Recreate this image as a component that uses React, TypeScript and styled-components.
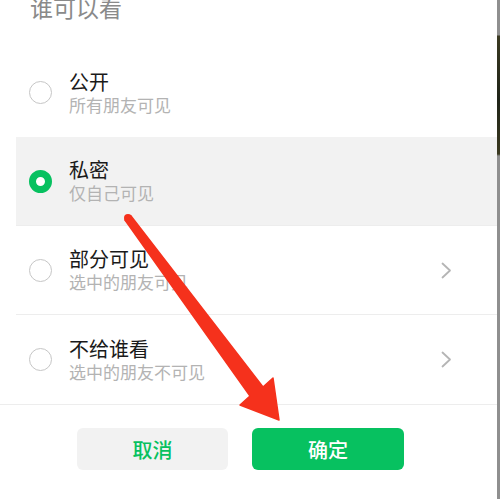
import React from "react";
import styled, { createGlobalStyle } from "styled-components";

const GlobalStyle = createGlobalStyle`
  html, body { margin: 0; padding: 0; background: #ffffff; }
  body { font-family: "Noto Sans CJK SC", "Noto Sans", sans-serif; overflow: hidden; }
`;

const Page = styled.div`
  position: relative;
  display: flex;
  width: 500px;
  height: 499px;
  overflow: hidden;
`;

const Panel = styled.div`
  flex: 1;
  display: flex;
  flex-direction: column;
  background: #ffffff;
  border-bottom-right-radius: 6px;
`;

const EdgeStrip = styled.div`
  width: 3px;
  background: linear-gradient(
    to bottom,
    #8f8f8f 0px,
    #8f8f8f 35px,
    #3b3a22 36px,
    #1f2418 100px,
    #3a3920 154px,
    #8f8f8f 156px,
    #8f8f8f 100%
  );
`;

const Title = styled.div`
  font-size: 23px;
  line-height: 23px;
  color: #8a8a8a;
  padding-left: 30px;
  margin-top: -4px;
  height: 23px;
`;

const List = styled.div`
  display: flex;
  flex-direction: column;
  margin-top: 29px;
  border-bottom: 1px solid #ededed;
`;

const Row = styled.div<{ $active?: boolean; $divider?: boolean }>`
  display: flex;
  align-items: center;
  gap: 17px;
  height: 89px;
  box-sizing: border-box;
  margin-left: 16px;
  padding-left: 13px;
  padding-right: 45px;
  background: ${(p) => (p.$active ? "#f2f2f2" : "transparent")};
  border-bottom: ${(p) => (p.$divider ? "1px solid #ededed" : "none")};
`;

const Radio = styled.span<{ $checked?: boolean }>`
  box-sizing: border-box;
  flex: none;
  width: 23px;
  height: 23px;
  border-radius: 50%;
  background: #ffffff;
  border: ${(p) => (p.$checked ? "7px solid #07c160" : "1.5px solid #c6c6c6")};
`;

const Texts = styled.div`
  flex: 1;
  display: flex;
  flex-direction: column;
`;

const RowTitle = styled.div`
  font-size: 20px;
  line-height: 24px;
  color: #1a1a1a;
`;

const RowSub = styled.div`
  font-size: 17px;
  line-height: 22px;
  color: #b3b3b3;
`;

const Chevron = styled.svg`
  flex: none;
  width: 11px;
  height: 17px;
`;

const Footer = styled.div`
  display: flex;
  gap: 24px;
  padding-top: 23px;
  padding-left: 77px;
`;

const Button = styled.button<{ $primary?: boolean }>`
  width: ${(p) => (p.$primary ? "152px" : "151px")};
  height: 42px;
  border: none;
  border-radius: 6px;
  font-family: "Noto Sans CJK SC", "Noto Sans", sans-serif;
  font-size: 20px;
  font-weight: 500;
  background: ${(p) => (p.$primary ? "#07c160" : "#f2f2f2")};
  color: ${(p) => (p.$primary ? "#ffffff" : "#07c160")};
  padding: 0;
`;

const ArrowLayer = styled.svg`
  position: absolute;
  left: 0;
  top: 0;
  width: 500px;
  height: 499px;
  pointer-events: none;
`;

const options = [
  { title: "公开", sub: "所有朋友可见", checked: false, more: false, divider: false },
  { title: "私密", sub: "仅自己可见", checked: true, more: false, divider: true },
  { title: "部分可见", sub: "选中的朋友可见", checked: false, more: true, divider: true },
  { title: "不给谁看", sub: "选中的朋友不可见", checked: false, more: true, divider: false },
];

export default function App() {
  return (
    <>
      <GlobalStyle />
      <Page>
        <Panel>
          <Title>谁可以看</Title>
          <List>
            {options.map((o) => (
              <Row key={o.title} $active={o.checked} $divider={o.divider}>
                <Radio $checked={o.checked} />
                <Texts>
                  <RowTitle>{o.title}</RowTitle>
                  <RowSub>{o.sub}</RowSub>
                </Texts>
                {o.more && (
                  <Chevron viewBox="0 0 11 17">
                    <path d="M1.5 1.5 L9 8.5 L1.5 15.5" fill="none" stroke="#b5b5b5" strokeWidth="1.8" strokeLinecap="round" strokeLinejoin="round" />
                  </Chevron>
                )}
              </Row>
            ))}
          </List>
          <Footer>
            <Button>取消</Button>
            <Button $primary>确定</Button>
          </Footer>
        </Panel>
        <EdgeStrip />
        <ArrowLayer viewBox="0 0 500 499">
          <polygon
            points="131,216 263,387 273,378 279,420 240,405 250,396 125,220"
            fill="#f5311c"
            stroke="#f5311c"
            strokeWidth="1.5"
            strokeLinejoin="round"
          />
          <circle cx="128" cy="218" r="4" fill="#f5311c" />
        </ArrowLayer>
      </Page>
    </>
  );
}
